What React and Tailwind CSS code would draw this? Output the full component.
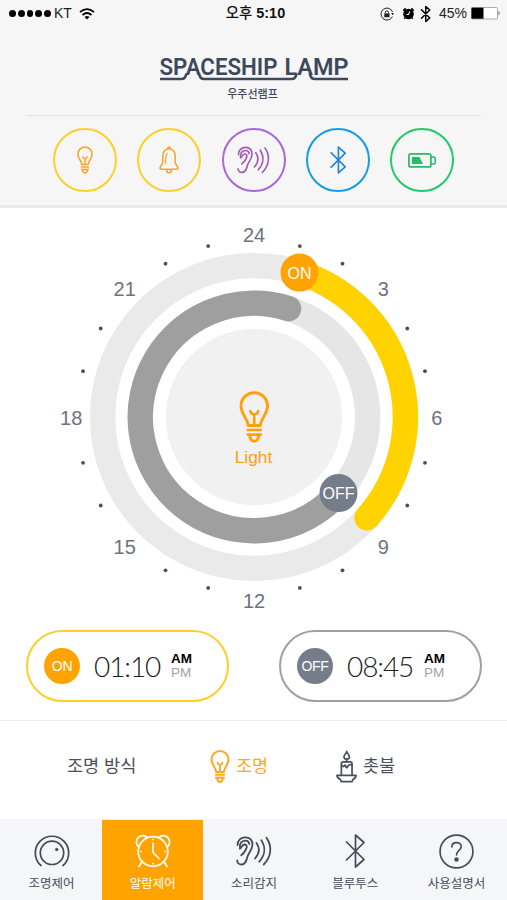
const CX = 224;
const CY = 197;
const OUTER = 151.4;
const INNER = 113.7;

const polar = (r, deg) => {
    const a = ((deg - 90) * Math.PI) / 180;
    return [CX + r * Math.cos(a), CY + r * Math.sin(a)];
};

const arc = (r, from, to) => {
    const [x1, y1] = polar(r, from);
    const [x2, y2] = polar(r, to);
    const large = to - from > 180 ? 1 : 0;
    return `M${x1} ${y1} A${r} ${r} 0 ${large} 1 ${x2} ${y2}`;
};

/* ICONS */
function BulbIcon({ className, strokeWidth = 2 }) {
    return (
        <svg viewBox="0 0 30 52" className={className} fill="none" stroke="currentColor" strokeWidth={strokeWidth} strokeLinecap="round" strokeLinejoin="round">
            <path d="M9 34.5 C8.4 28 1.7 22.5 1.7 15 A13.3 13.3 0 0 1 28.3 15 C28.3 22.5 21.6 28 21 34.5 Z" />
            <path d="M11 20 Q11.5 23 15 23.5 Q18.5 23 19 20 M15 24 V34" strokeWidth={strokeWidth * 0.9} />
            <path d="M8.5 39 H21.5 M8.5 43.7 H21.5" strokeWidth={strokeWidth * 0.9} />
            <path d="M10.5 45 Q11.5 50.3 15 50.3 Q18.5 50.3 19.5 45" />
        </svg>
    );
}

function BellIcon({ className }) {
    return (
        <svg viewBox="0 0 20 28" className={className} fill="none" stroke="currentColor" strokeWidth="1.6" strokeLinecap="round" strokeLinejoin="round">
            <path d="M10 2.8 C14.3 3.2 16.2 6.5 16.2 10.5 V16 C16.2 19 19 20 19 22.2 Q19 23.3 17.5 23.3 H2.5 Q1 23.3 1 22.2 C1 20 3.8 19 3.8 16 V10.5 C3.8 6.5 5.7 3.2 10 2.8 Z" />
            <path d="M8.8 2.6 Q8.8 1 10 1 Q11.2 1 11.2 2.6" />
            <path d="M8.2 7.3 Q6.6 9 6.6 17.5" strokeWidth="1.2" />
            <path d="M7.5 24 Q8 26.8 10 26.8 Q12 26.8 12.5 24" />
        </svg>
    );
}

function EarIcon({ className, strokeWidth = 1.8 }) {
    return (
        <svg viewBox="0 0 36 30" className={className} fill="none" stroke="currentColor" strokeWidth={strokeWidth} strokeLinecap="round" strokeLinejoin="round">
            <path d="M1.5 9 C1.5 4.5 5 1.3 9.3 1.3 C14 1.3 16.8 4.5 16.4 9 C16 14.5 12.5 16.8 11.5 20.5 C10.5 24.5 9.5 28.5 5.5 28.5 C3.2 28.5 1.4 27 1.2 24.5" />
            <path d="M4 12.5 C3 8 5.5 4.6 9.3 4.6 C11.5 4.6 13 6 13.2 8" />
            <path d="M4 12.5 C5.8 12 5.5 9 8.3 8.5 C11 8.2 11.3 11 10.2 12.8 C9 15 8.5 17 5.2 19.3" />
            <path d="M20.5 7 C24 12 23.5 17.5 19 22.5" />
            <path d="M25.3 4.3 C29.8 11 29.3 19 23.2 25.7" />
            <path d="M30.5 1.8 C36.2 10 35.6 20.5 27.7 28.5" />
        </svg>
    );
}

function BluetoothIcon({ className, strokeWidth = 1.7 }) {
    return (
        <svg viewBox="0 0 20 34" className={className} fill="none" stroke="currentColor" strokeWidth={strokeWidth} strokeLinecap="round" strokeLinejoin="round">
            <path d="M1.5 8 L19 25.5 L10.5 33 V1 L19 8.5 L1.5 26" />
        </svg>
    );
}

function BatteryIcon({ className }) {
    return (
        <svg viewBox="0 0 28 15" className={className}>
            <rect x="0.9" y="0.9" width="22" height="13" rx="2" fill="none" stroke="currentColor" strokeWidth="1.7" />
            <path d="M23 4 H26 Q27.2 4 27.2 5.2 V9.8 Q27.2 11 26 11 H23" fill="none" stroke="currentColor" strokeWidth="1.5" />
            <path d="M4 4 H11.5 L15 11 H4 Z" fill="currentColor" />
        </svg>
    );
}

function CandleIcon({ className }) {
    return (
        <svg viewBox="0 0 22 34" className={className} fill="none" stroke="currentColor" strokeWidth="1.8" strokeLinecap="round" strokeLinejoin="round">
            <path d="M11.2 1.2 C11.5 3.5 14 4.5 14 6.8 Q14 9.3 11.2 9.3 Q8.4 9.3 8.4 6.8 C8.4 4.5 10.8 4 11.2 1.2 Z" />
            <path d="M11.2 9.5 V12" />
            <path d="M5.6 26 V14 Q5.6 12.2 7.6 12.2 H14.8 Q16.8 12.2 16.8 14 V26" />
            <path d="M6 15.5 Q7.5 18.3 9 16 Q10 15 10.5 17.5 Q11.5 19.5 12.5 16.5 Q14 14.5 16.5 15.5" />
            <path d="M1 26.4 H21 Q20.6 29.8 17.8 30.4 L16.8 32.8 H5.5 L4.5 30.4 Q1.4 29.8 1 26.4 Z" />
        </svg>
    );
}

function DialIcon({ className }) {
    return (
        <svg viewBox="0 0 36 32" className={className} fill="none" stroke="currentColor" strokeWidth="1.7" strokeLinecap="round">
            <path d="M7 30.5 A16.7 16.7 0 1 1 29 30.5" />
            <circle cx="18" cy="17.8" r="11.7" />
            <circle cx="22.7" cy="14.5" r="1.2" fill="currentColor" strokeWidth="1" />
        </svg>
    );
}

function ClockIcon({ className }) {
    return (
        <svg viewBox="0 0 36 34" className={className} fill="none" stroke="currentColor" strokeWidth="1.7" strokeLinecap="round" strokeLinejoin="round">
            <circle cx="18" cy="17.5" r="14.8" />
            <path d="M3.2 12.5 A6.2 6.2 0 1 1 12.4 3.6 M32.8 12.5 A6.2 6.2 0 1 0 23.6 3.6" />
            <path d="M6.5 28.5 L4 32.5 M29.5 28.5 L32 32.5" />
            <path d="M18 9 V18.5 L24 24.5" />
            <path d="M18 5.3 V5.6 M18 29.4 V29.7 M5.8 17.5 H6.1 M29.9 17.5 H30.2" />
        </svg>
    );
}

function HelpIcon({ className }) {
    return (
        <svg viewBox="0 0 36 36" className={className} fill="none" stroke="currentColor" strokeWidth="1.7" strokeLinecap="round">
            <circle cx="18" cy="18" r="16.9" />
            <path d="M13.2 13.3 C13.2 10.5 15.3 8.8 18 8.8 C20.7 8.8 22.8 10.5 22.8 13 C22.8 16.8 18 16.8 18 21.5" />
            <circle cx="18" cy="26.2" r="1.5" fill="currentColor" />
        </svg>
    );
}

function StatusBar() {
    return (
        <div className="relative flex h-[27px] items-center justify-between pl-[9px] pr-[6px] text-[14px] text-black">
            <div className="flex items-center">
                <div className="flex gap-[2px]">
                    {[0, 1, 2, 3, 4].map((i) => (
                        <span key={i} className="size-[6.8px] rounded-full bg-black" />
                    ))}
                </div>
                <span className="ml-[3px] text-[14px] text-[#222]">KT</span>
                <svg viewBox="0 0 16 12" className="ml-[7px] h-[12px] w-[16px]" fill="none" stroke="black" strokeWidth="1.7">
                    <path d="M1 4.2 Q8 -1.8 15 4.2 M3.5 7 Q8 3 12.5 7" />
                    <path d="M5.5 9 Q8 7 10.5 9 L8 11.6 Z" fill="black" stroke="none" />
                </svg>
            </div>
            <div className="flex items-center">
                <svg viewBox="0 0 14 14" className="size-[14px]" fill="none" stroke="#222">
                    <path d="M12.6 5 A6 6 0 1 0 12.4 9.6" strokeWidth="1" />
                    <path d="M11.2 6 H14 L12.6 8.2 Z" fill="#222" stroke="none" />
                    <rect x="4.3" y="6.4" width="5.2" height="3.8" fill="#222" stroke="none" />
                    <path d="M5.3 6.5 V5.3 Q5.3 4 6.9 4 Q8.5 4 8.5 5.3 V6.5" />
                </svg>
                <svg viewBox="0 0 14 14" className="ml-[8px] size-[13px]">
                    <circle cx="7" cy="7.5" r="5.7" />
                    <path d="M1.5 4.3 L4 1.6 M12.5 4.3 L10 1.6" stroke="black" strokeWidth="2" />
                    <path d="M3.5 11.5 L2.3 12.8 M10.5 11.5 L11.7 12.8" stroke="black" strokeWidth="1.4" />
                    <path d="M8.5 4.8 L7 8 H4.8" stroke="#f6f6f6" fill="none" strokeWidth="1.1" />
                </svg>
                <BluetoothIcon className="ml-[5px] h-[16px] w-[11px]" strokeWidth={3.2} />
                <span className="ml-[8px] text-[14px] text-[#222]">45%</span>
                <svg viewBox="0 0 30 13" className="ml-1 h-[13px] w-[30px]">
                    <rect x="0.5" y="0.5" width="26" height="11.5" rx="1" fill="white" stroke="#999" strokeWidth="0.8" />
                    <rect x="0.5" y="0.7" width="12" height="11" fill="black" />
                    <path d="M27.7 4 Q29.5 6.2 27.7 8.5 Z" fill="black" />
                </svg>
            </div>
            <div className="absolute inset-x-0 top-[3px] pl-1 text-center text-[14.4px] font-bold leading-[21px] text-[#111]">
                <span className="font-medium">오후</span> 5:10
            </div>
        </div>
    );
}

function Logo() {
    return (
        <div className="flex flex-col items-center text-[#3d485d]">
            <svg viewBox="-2 -8 194 38" className="h-[38px] w-[194px]" fill="currentColor">
                <g fontFamily="Roboto" fontWeight="600" fontSize="23">
                    <text x="0.5" y="18.5" textLength="118" lengthAdjust="spacingAndGlyphs">SPACESHIP</text>
                    <text x="125.5" y="18.5" textLength="64" lengthAdjust="spacingAndGlyphs">LAMP</text>
                </g>
                {/* Underline that runs up into the feet of both A's */}
                <path
                    d="M1 23 H22.5 Q25.4 23 26.4 20.6 L27.6 17.4 M39.8 17.4 L41 20.6 Q42 23 44.8 23 H132.8 Q135.6 23 136.6 20.6 L137.8 17.4 M150.6 17.4 L151.8 20.6 Q152.8 23 155.6 23 H189"
                    fill="none"
                    stroke="currentColor"
                    strokeWidth="2.6"
                />
            </svg>
            <span className="pr-[2px] text-[11px] font-medium leading-4">우주선램프</span>
        </div>
    );
}

function Dial() {
    const ticks = [];
    for (let deg = 0; deg < 360; deg += 15) {
        if (deg % 45 !== 0) ticks.push(polar(177, deg));
    }
    const hours = ["24", "3", "6", "9", "12", "15", "18", "21"];
    const [onX, onY] = polar(OUTER, 17.5);
    const [offX, offY] = polar(INNER, 132);

    return (
        <svg viewBox="0 0 448 394" className="h-[394px] w-[448px]" fontFamily="Liberation Sans, Arial, sans-serif" textAnchor="middle">
            <circle cx={CX} cy={CY} r={OUTER} fill="none" stroke="#eaeaea" strokeWidth="25.4" />
            <circle cx={CX} cy={CY} r={INNER} fill="none" stroke="#e6e6e6" strokeWidth="25.4" />
            <circle cx={CX} cy={CY} r="88.2" fill="#f1f1f1" />
            <path d={arc(OUTER, 17.5, 131.7)} fill="none" stroke="#ffd200" strokeWidth="25.4" strokeLinecap="round" />
            <path d={arc(INNER, 132, 377.7)} fill="none" stroke="#9f9f9f" strokeWidth="25.4" strokeLinecap="round" />

            {ticks.map(([x, y], i) => (
                <circle key={i} cx={x} cy={y} r="1.9" fill="#4b5058" />
            ))}
            {hours.map((h, i) => {
                const [x, y] = polar(182.8, i * 45);
                return (
                    <text key={h} x={x} y={y + 7.8} fontSize="20" fill="#6b7280">{h}</text>
                );
            })}

            {/* Handles */}
            <circle cx={onX} cy={onY} r="19" fill="#ffa300" />
            <text x={onX} y={onY + 6} fontSize="16" fill="white">ON</text>
            <circle cx={offX} cy={offY} r="19" fill="#757d8a" />
            <text x={offX} y={offY + 6} fontSize="16" fill="white">OFF</text>
        </svg>
    );
}

function TimePill({ on, time }) {
    return (
        <div className={`flex h-[72px] w-[203px] items-center rounded-full border-2 bg-white pl-4 ${on ? "border-[#fccf2a]" : "border-[#a0a0a0]"}`}>
            <span className={`flex size-9 items-center justify-center rounded-full text-[14px] tracking-[-0.3px] text-white ${on ? "bg-[#ffa300]" : "bg-[#757d8a]"}`}>
                {on ? "ON" : "OFF"}
            </span>
            <span className="ml-[14px] w-[69px] whitespace-nowrap font-[Lato] text-[28px] font-light tracking-[-1.1px] text-[#1c1c1c]">{time}</span>
            <span className="ml-2 flex flex-col text-[13.5px]">
                <b className="h-[14px] leading-[14px] text-black">AM</b>
                <span className="h-[14px] leading-[14px] text-[#a3a3a3]">PM</span>
            </span>
        </div>
    );
}

const shortcuts = [
    { ring: "border-[#fccf2a] text-[#f9a52b]", icon: <BulbIcon className="h-[28px] w-[16px]" strokeWidth={3} /> },
    { ring: "border-[#fccf2a] text-[#f9a52b]", icon: <BellIcon className="h-[28px] w-[20px]" /> },
    { ring: "border-[#a868d8] text-[#a35bb8]", icon: <EarIcon className="h-[28px] w-[33px]" /> },
    { ring: "border-[#159ce4] text-[#2586d4]", icon: <BluetoothIcon className="h-[28px] w-[16px]" strokeWidth={2.1} /> },
    { ring: "border-[#1ecb68] text-[#25bc69]", icon: <BatteryIcon className="h-[15px] w-[28px]" /> },
];

const tabs = [
    { label: "조명제어", icon: <DialIcon className="h-[32px] w-[36px]" /> },
    { label: "알람제어", icon: <ClockIcon className="h-[34px] w-[36px]" />, active: true },
    { label: "소리감지", icon: <EarIcon className="h-[30px] w-[36px]" strokeWidth={1.8} /> },
    { label: "블루투스", icon: <BluetoothIcon className="h-[34px] w-[20px]" /> },
    { label: "사용설명서", icon: <HelpIcon className="size-[35px]" /> },
];

export default function App() {
    return (
        <div className="flex h-[900px] w-[507px] flex-col overflow-hidden bg-white font-['Liberation_Sans','Noto_Sans_CJK_KR',sans-serif]">
            <header className="h-[208px] shrink-0 border-b-[3px] border-[#ebebeb] bg-[#f6f6f6]">
                <StatusBar />
                <div className="mx-[26px] flex h-[89px] flex-col border-b border-[#e3e3e3] pt-[21px]">
                    <Logo />
                </div>
                <div className="flex justify-center gap-[20.3px] pt-3">
                    {shortcuts.map((s, i) => (
                        <div key={i} className={`flex size-[64px] items-center justify-center rounded-full border-2 ${s.ring}`}>
                            {s.icon}
                        </div>
                    ))}
                </div>
            </header>

            <section className="relative flex h-[422px] shrink-0 justify-center pt-[12px]">
                <Dial />
                <div className="absolute left-1/2 top-[183px] flex -translate-x-1/2 flex-col items-center text-[#ffa010]">
                    <BulbIcon className="ml-px h-[52px] w-[30px]" strokeWidth={3} />
                    <span className="mt-0.5 text-[17.3px] leading-6">Light</span>
                </div>
            </section>

            <section className="flex h-[91px] shrink-0 justify-between border-b border-[#ededed] pl-[26px] pr-[25px]">
                <TimePill on time="01:10" />
                <TimePill time="08:45" />
            </section>

            <section className="flex h-[98px] shrink-0 items-center pb-[7px] pl-[67px] text-[17.5px] text-[#4a505c]">
                <span className="w-[143px]">조명 방식</span>
                <span className="flex w-[126px] items-center gap-[6px] text-[#ffa822]">
                    <BulbIcon className="h-[33px] w-[20px]" strokeWidth={3.2} />
                    조명
                </span>
                <span className="flex items-center gap-[6px]">
                    <CandleIcon className="h-[33px] w-[21px]" />
                    촛불
                </span>
            </section>

            <nav className="grid flex-1 grid-cols-5 bg-[#f5f6f7] pl-px pt-px">
                {tabs.map((t) => (
                    <div key={t.label} className={`flex flex-col items-center pt-[13px] ${t.active ? "bg-[#ffa300] text-white" : "text-[#454b5a]"}`}>
                        <div className="flex h-9 items-center">{t.icon}</div>
                        <span className="mt-[5px] text-[12.5px] leading-5">{t.label}</span>
                    </div>
                ))}
            </nav>
        </div>
    );
}
